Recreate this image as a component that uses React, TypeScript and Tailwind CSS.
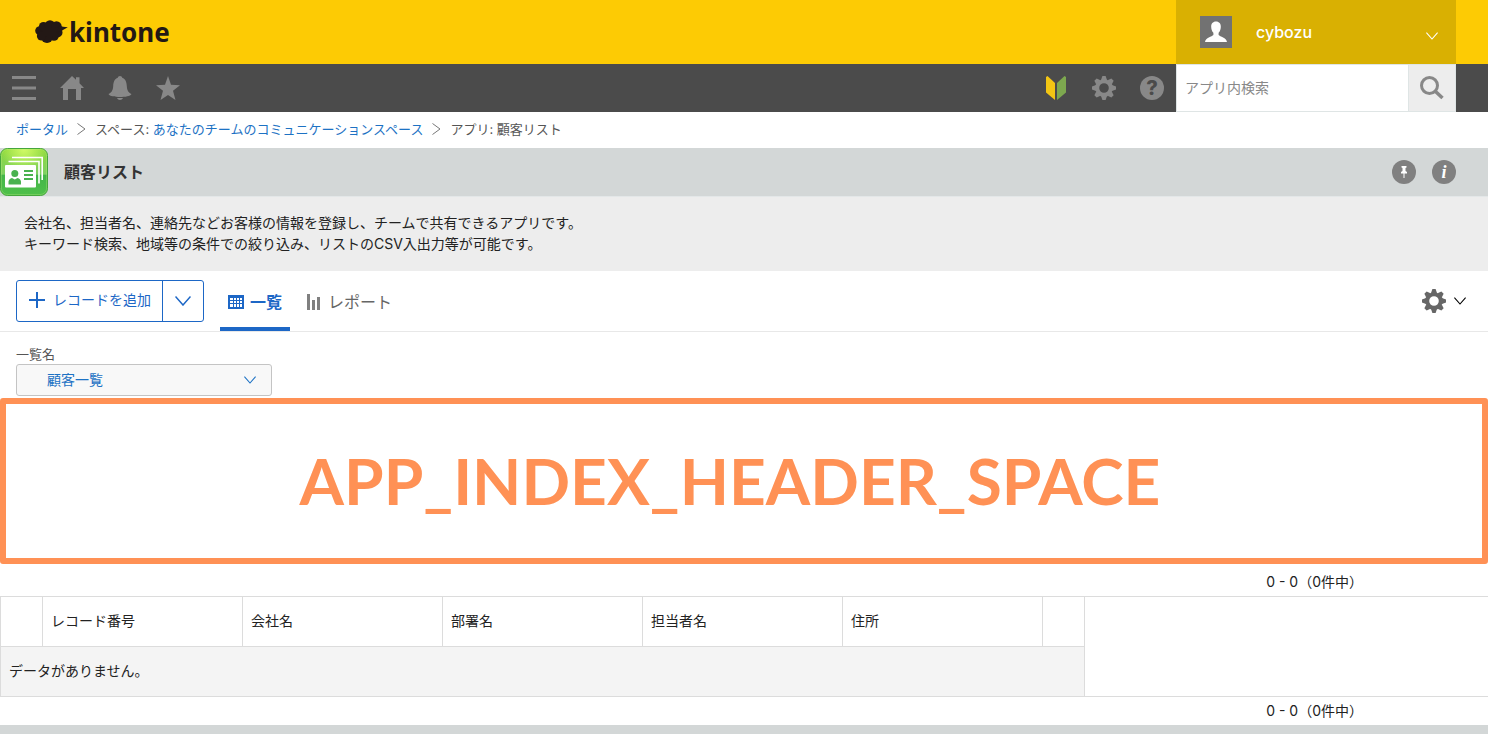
import { useState } from "react";

const COLUMNS = ["レコード番号", "会社名", "部署名", "担当者名", "住所"];
const TEETH = [0, 45, 90, 135, 180, 225, 270, 315];

function Gear() {
  return (
    <svg width="24" height="24" viewBox="-12 -12 24 24" aria-hidden="true">
      <circle r="6.8" fill="none" stroke="currentColor" strokeWidth="4" />
      {TEETH.map((deg) => (
        <path
          key={deg}
          d="M-3 -8 L-1.6 -12 L1.6 -12 L3 -8Z"
          fill="currentColor"
          transform={`rotate(${deg})`}
        />
      ))}
    </svg>
  );
}

function Chevron({ className }: { className: string }) {
  return (
    <svg
      viewBox="0 0 16 10"
      className={className}
      fill="none"
      stroke="currentColor"
      strokeWidth="1.5"
      aria-hidden="true"
    >
      <path d="M0.500 0.500 L8 9 L15.500 0.500" />
    </svg>
  );
}

function CrumbArrow() {
  return (
    <svg
      width="9"
      height="12"
      viewBox="0 0 9 12"
      fill="none"
      stroke="#777"
      aria-hidden="true"
    >
      <path d="M0.5 0.5 L8 6 L0.5 11.5" />
    </svg>
  );
}

function Logo() {
  return (
    <a href="#" className="flex items-center gap-px text-[#231815]">
      <svg width="33" height="24" viewBox="0 0 33 24" aria-hidden="true">
        <g fill="currentColor">
          <circle cx="4.800" cy="10.800" r="4.600" />
          <circle cx="8.500" cy="6.500" r="4.600" />
          <circle cx="15" cy="5.600" r="5.300" />
          <circle cx="21.500" cy="6.500" r="5.200" />
          <circle cx="22.500" cy="12.500" r="5" />
          <circle cx="19" cy="16" r="4.800" />
          <circle cx="12" cy="17" r="6" />
          <circle cx="6.500" cy="16" r="4.600" />
          <path d="M24.500 5C26.500 7 29.500 7 32.800 7.300C30.500 9 28 9.500 26 11.500L22 12Z" />
          <path d="M8 8H21V16H8Z" />
        </g>
      </svg>
      <span className="font-['Noto_Sans'] text-[26px] leading-8 font-bold">
        kintone
      </span>
    </a>
  );
}

function AppIcon() {
  return (
    <svg width="48" height="48" viewBox="0 0 48 48" aria-hidden="true">
      <defs>
        <linearGradient id="base" x1="0" y1="0" x2="0" y2="1">
          <stop offset="0" stopColor="#8fd93a" />
          <stop offset="0.55" stopColor="#7ed063" />
          <stop offset="0.56" stopColor="#43b549" />
          <stop offset="1" stopColor="#4fc04a" />
        </linearGradient>
        <radialGradient id="shine" cx="0.5" cy="0" r="0.5">
          <stop offset="0" stopColor="#d2fb66" />
          <stop offset="1" stopColor="#d2fb66" stopOpacity="0" />
        </radialGradient>
      </defs>
      <rect
        x="0.5"
        y="0.5"
        width="47"
        height="47"
        rx="7"
        fill="url(#base)"
        stroke="#46a63c"
      />
      <rect x="1" y="1" width="46" height="46" rx="6" fill="url(#shine)" />
      <rect
        x="1.500"
        y="1.500"
        width="45"
        height="45"
        rx="6"
        fill="none"
        stroke="#b5ec7d"
        strokeOpacity="0.35"
      />
      <path
        d="M12 9.500H42.200V32M8.500 13.500H39V35.500"
        fill="none"
        stroke="#fff"
        strokeWidth="1.600"
      />
      <rect x="5" y="17" width="31" height="22.500" rx="1" fill="#fff" />
      <g fill="#49b24f">
        <circle cx="14.800" cy="25.500" r="3.500" />
        <path d="M8.500 36.500V33.500Q9 30.500 12 30L14.800 31.500L17.500 30Q20.500 30.500 21 33.500V36.500Z" />
        <path d="M24 22H33V24H24ZM24 26H33V28H24ZM24 30H33V32H24Z" />
      </g>
    </svg>
  );
}

function Pager() {
  return <p className="pr-[125px] text-right leading-7">0 - 0（0件中）</p>;
}

export default function App() {
  const [keyword, setKeyword] = useState("");

  return (
    <div className="flex min-h-screen flex-col bg-white font-['Inter','Noto_Sans_CJK_JP',sans-serif] text-sm text-[#222]">
      <header className="flex h-16 items-center justify-between bg-[#fdcb04] pr-8 pl-[35px]">
        <Logo />
        <button className="flex h-16 w-[280px] items-center bg-[#d9b002] px-6 text-base text-white">
          <span className="flex h-8 w-8 bg-[#727272]">
            <svg width="32" height="32" viewBox="0 0 32 32" aria-hidden="true">
              <path
                fill="#fff"
                d="M16 5.500C19.200 5.500 21 7.800 20.800 11C20.700 13.500 20 15.500 18.600 16.800V19C20 20.800 26.500 21.300 27 26H5C5.500 21.300 12 20.800 13.400 19V16.800C12 15.500 11.300 13.500 11.200 11C11 7.800 12.800 5.500 16 5.500Z"
              />
            </svg>
          </span>
          <span className="grow pl-6 text-left font-medium">cybozu</span>
          <Chevron className="mt-2 mr-[-6px] h-2 w-3" />
        </button>
      </header>

      <nav className="flex h-12 items-center bg-[#4b4b4b] pr-8 text-[#888]">
        <button aria-label="メニュー" className="flex size-12 items-center justify-center">
          <svg width="24" height="24" viewBox="0 0 24 24" fill="currentColor">
            <path d="M0 0H24V3H0ZM0 10.500H24V13.500H0ZM0 21H24V24H0Z" />
          </svg>
        </button>
        <a href="#" aria-label="ポータル" className="flex size-12 items-center justify-center">
          <svg width="24" height="24" viewBox="0 0 24 24" fill="currentColor">
            <path d="M12 0L16 3.800V1.200H19.500V7.200L24 12H21V24H16V13H8V24H3V12H0Z" />
          </svg>
        </a>
        <button aria-label="通知" className="flex size-12 items-center justify-center">
          <svg width="24" height="24" viewBox="0 0 24 24" fill="currentColor">
            <path d="M12 0C13.300 0 14 0.800 14.200 1.800C17.500 3 18.600 6 18.800 10C19 14.500 20.500 16.500 23.500 18C22.500 20.300 17 21 12 21C7 21 1.500 20.300 0.500 18C3.500 16.500 5 14.500 5.200 10C5.400 6 6.500 3 9.800 1.800C10 0.800 10.700 0 12 0ZM9 22H15C14.500 23.300 13.300 24 12 24C10.700 24 9.500 23.300 9 22Z" />
          </svg>
        </button>
        <button aria-label="お気に入り" className="flex size-12 items-center justify-center">
          <svg width="24" height="24" viewBox="0 0 24 24" fill="currentColor">
            <path d="M12 0L15 8.800L24 9.200L17 14.800L19.500 24L12 18.900L4.500 24L7 14.800L0 9.200L9 8.800Z" />
          </svg>
        </button>
        <div className="grow" />
        <button aria-label="はじめに" className="flex size-12 items-center justify-center">
          <svg width="24" height="24" viewBox="0 0 24 24">
            <path fill="#f3c614" d="M3.500 0L11 7V24L2 16.500V1Z" />
            <path fill="#7da84f" d="M20.500 0L13 7V24L22 16.500V1Z" />
          </svg>
        </button>
        <button aria-label="設定" className="flex size-12 items-center justify-center">
          <Gear />
        </button>
        <button aria-label="ヘルプ" className="flex size-12 items-center justify-center">
          <span className="flex size-6 items-center justify-center rounded-full bg-[#888] text-xl font-extrabold text-[#4b4b4b]">
            ?
          </span>
        </button>
        <form
          className="flex h-12 w-[280px] border border-[#dfe5e5] bg-white"
          onSubmit={(e) => e.preventDefault()}
        >
          <input
            type="text"
            aria-label="アプリ内検索"
            placeholder="アプリ内検索"
            value={keyword}
            onChange={(e) => setKeyword(e.target.value)}
            className="min-w-0 grow px-2 text-[#333] outline-none placeholder:text-[#888]"
          />
          <button
            aria-label="検索"
            className="flex w-12 items-center justify-center border-l border-[#dfe5e5] bg-[#ededed] text-[#888]"
          >
            <svg width="24" height="24" viewBox="0 0 24 24" fill="none" stroke="currentColor">
              <circle cx="9.500" cy="9.500" r="8" strokeWidth="3" />
              <path d="M15 15L22.500 22" strokeWidth="3.500" />
            </svg>
          </button>
        </form>
      </nav>

      <div className="flex h-9 items-center px-4 pb-[2px] text-[13px] text-[#555]">
        <a href="#" className="text-[#1d72c4]">
          ポータル
        </a>
        <span className="px-[9px]">
          <CrumbArrow />
        </span>
        <span>
          スペース:{" "}
          <a href="#" className="text-[#1d72c4]">
            あなたのチームのコミュニケーションスペース
          </a>
        </span>
        <span className="px-[9px]">
          <CrumbArrow />
        </span>
        <span>アプリ: 顧客リスト</span>
      </div>

      <div className="flex h-12 items-center gap-4 bg-[#d3d7d7] pr-8">
        <AppIcon />
        <h1 className="grow text-base font-bold text-[#333]">顧客リスト</h1>
        <button
          aria-label="ピン留め"
          className="flex size-6 items-center justify-center rounded-full bg-[#808080]"
        >
          <svg width="8" height="12" viewBox="0 0 8 12" fill="#fff">
            <path d="M1.500 0H6.500V1.500L5.500 2V5L7 6V7.500H4.500V12H3.500V7.500H1V6L2.500 5V2L1.500 1.500Z" />
          </svg>
        </button>
        <button
          aria-label="アプリの情報"
          className="flex size-6 items-center justify-center rounded-full bg-[#808080] font-['Liberation_Serif'] text-lg leading-6 font-bold text-white italic"
        >
          i
        </button>
      </div>

      <div className="border-t border-[#e3e7e8] bg-[#ededed] px-6 pt-[15px] pb-[17px] leading-[21px]">
        <p>会社名、担当者名、連絡先などお客様の情報を登録し、チームで共有できるアプリです。</p>
        <p>キーワード検索、地域等の条件での絞り込み、リストのCSV入出力等が可能です。</p>
      </div>

      <div className="flex h-[61px] items-center border-b border-[#e8e8e8] pr-[22px] pl-4">
        <div className="flex h-[42px] rounded-[3px] border border-[#1d67c6] text-[#1d67c6]">
          <button className="flex items-center gap-2 pr-[11px] pb-[2px] pl-3">
            <svg width="16" height="16" viewBox="0 0 16 16" stroke="currentColor" strokeWidth="2">
              <path d="M8 0V16M0 8H16" />
            </svg>
            レコードを追加
          </button>
          <button
            aria-label="追加方法"
            className="flex w-[41px] items-center justify-center border-l border-[#1d67c6]"
          >
            <Chevron className="h-[10px] w-4" />
          </button>
        </div>
        <a
          href="#"
          className="ml-4 flex h-[60px] items-center gap-[6px] border-b-4 border-[#1d67c6] px-2 pt-[6px] text-base font-bold text-[#1d67c6]"
        >
          <svg width="16" height="14" viewBox="0 0 16 14">
            <path fill="currentColor" d="M0 0H16V14H0Z" />
            <path
              fill="#fff"
              d="M2 3H5V5H2ZM6 3H8V5H6ZM9 3H11V5H9ZM12 3H14V5H12ZM2 6H5V8H2ZM6 6H8V8H6ZM9 6H11V8H9ZM12 6H14V8H12ZM2 9H5V12H2ZM6 9H8V12H6ZM9 9H11V12H9ZM12 9H14V12H12Z"
            />
          </svg>
          一覧
        </a>
        <a
          href="#"
          className="ml-4 flex h-[60px] items-center gap-[7px] border-b-4 border-transparent pt-[6px] text-base text-[#666]"
        >
          <svg width="15" height="16" viewBox="0 0 15 16" fill="#808080">
            <path d="M1 0H4V16H1ZM6 6H9V16H6ZM11 3H14V16H11Z" />
          </svg>
          レポート
        </a>
        <div className="grow" />
        <button aria-label="アプリの設定" className="flex items-center gap-2 text-[#666]">
          <Gear />
          <Chevron className="h-2 w-3 text-black" />
        </button>
      </div>

      <div className="flex flex-col items-start px-4 pt-3 pb-[2px]">
        <label htmlFor="view" className="text-[13px] leading-5 text-[#555]">
          一覧名
        </label>
        <div className="relative">
          <select
            id="view"
            className="h-8 w-64 appearance-none rounded-[3px] border border-[#c4c4c4] bg-[#f8f8f8] pl-[30px] text-[#1d72c4]"
          >
            <option>顧客一覧</option>
          </select>
          <Chevron className="pointer-events-none absolute top-3 right-4 h-2 w-3 text-[#1d72c4]" />
        </div>
      </div>

      <section className="flex h-[166px] items-center justify-center rounded-[3px] border-[6px] border-[#ff9155] pr-7 font-['Lato',sans-serif] text-[64px] font-bold text-[#ff9155]">
        APP_INDEX_HEADER_SPACE
      </section>

      <div className="pt-1">
        <Pager />
      </div>
      <div className="border-y border-[#dcdcdc]">
        <table className="w-[1085px] table-fixed border-separate border-spacing-0 text-left">
          <thead>
            <tr>
              <th className="h-[50px] w-[43px] border-x border-b border-[#dcdcdc]" />
              {COLUMNS.map((c) => (
                <th
                  key={c}
                  className="w-[200px] border-r border-b border-[#dcdcdc] px-2 pb-[2px] font-normal"
                >
                  {c}
                </th>
              ))}
              <th className="w-[42px] border-r border-b border-[#dcdcdc]" />
            </tr>
          </thead>
          <tbody>
            <tr>
              <td
                colSpan={7}
                className="h-[49px] border-x border-[#dcdcdc] bg-[#f4f4f4] px-2 pb-[2px]"
              >
                データがありません。
              </td>
            </tr>
          </tbody>
        </table>
      </div>
      <Pager />
      <footer className="min-h-2 grow bg-[#d3d7d7]" />
    </div>
  );
}
